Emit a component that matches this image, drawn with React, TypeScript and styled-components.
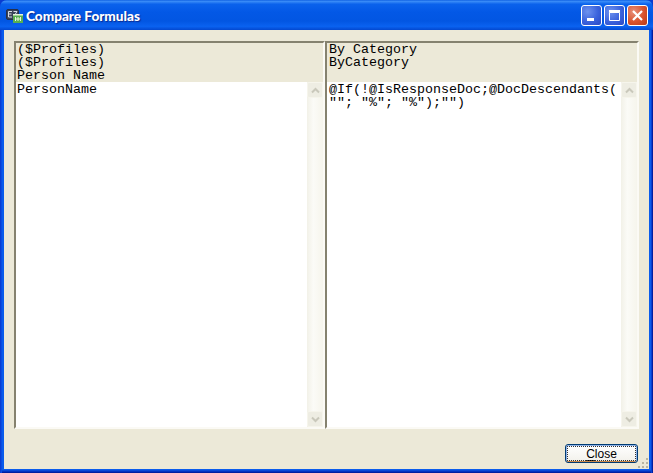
import React from "react";
import styled, { createGlobalStyle } from "styled-components";

const Global = createGlobalStyle`
  html, body { margin: 0; padding: 0; background: #0a3bd0; overflow: hidden; }
  #root { width: 653px; height: 473px; }
`;

const Win = styled.div`
  width: 653px; height: 473px; box-sizing: border-box;
  display: flex; flex-direction: column;
  background: #0a5cec;
  box-shadow: inset 1px 0 #0a3ed4, inset 2px 0 #0a4ee2, inset -1px 0 #001ea0, inset -2px 0 #0840d0, inset 0 -1px #001ea0, inset 0 -2px #0232c0, inset 0 -3px #0848d8;
  border-radius: 7px 7px 0 0;
  overflow: hidden;
`;
const TitleBar = styled.div`
  height: 30px; flex: none; box-sizing: border-box;
  display: flex; align-items: center; padding: 0 5px 0 6px;
  background: linear-gradient(180deg, #0a5be0 0%, #3c8ef8 4%, #0a62ec 14%, #0358e6 40%, #0256e2 70%, #0a62f0 88%, #0348d0 100%);
`;
const AppIcon = styled.svg`width: 17px; height: 14px; flex: none; margin-top: 2px;`;
const Title = styled.div`
  margin: 1px 0 0 3px; color: #fff; font: 900 13.6px Lato, "Open Sans", sans-serif;
  text-shadow: 1px 1px 1px #0a2a90; flex: 1; white-space: nowrap;
`;
const Controls = styled.div`display: flex; gap: 2px;`;
const Ctl = styled.div<{ $red?: boolean }>`
  width: 21px; height: 21px; box-sizing: border-box; border: 1px solid #fff; border-radius: 3px;
  background: ${p => p.$red
    ? "radial-gradient(circle at 30% 30%, #e8907a, #d8522c 55%, #b83a18)"
    : "radial-gradient(circle at 30% 30%, #6e92ee, #3a62dc 55%, #2a48c4)"};
  display: flex; align-items: center; justify-content: center;
  svg { display: block; }
`;
const Client = styled.div`
  flex: 1; margin: 0 4px 4px 4px; background: #ece9d8; min-height: 0;
  display: flex; flex-direction: column; padding: 11px 10px 6px 10px; position: relative;
`;
const Panes = styled.div`
  height: 388px; flex: none; box-sizing: border-box;
  display: grid; grid-template-columns: 311px 314px;
`;
const Pane = styled.div<{ $inset: number }>`
  box-sizing: border-box; display: flex; flex-direction: column; min-width: 0;
  border-top: 2px solid #85826f; border-left: 2px solid #85826f;
  border-right: 2px solid #fbfaf5; border-bottom: 2px solid #fbfaf5;
  --text-inset: ${p => p.$inset}px;
`;
const Head = styled.div`
  height: 39px; flex: none; padding-left: var(--text-inset); box-sizing: border-box;
  font: 13.33px/13px "Liberation Mono", monospace; color: #000; white-space: pre;
`;
const Body = styled.div`flex: 1; display: flex; min-height: 0; background: #fff;`;
const Text = styled.div`
  flex: 1; padding: 1px 0 0 var(--text-inset); min-width: 0;
  font: 13.33px/13px "Liberation Mono", monospace; color: #000; white-space: pre;
`;
const Scroll = styled.div`
  width: 16px; flex: none; display: flex; flex-direction: column; justify-content: space-between;
  background: linear-gradient(90deg, #f2f1e8, #fbfbf7 40%, #f6f5ec);
`;
const SBtn = styled.div`
  height: 16px; box-sizing: border-box; border: 1px solid #f6f5ec; border-radius: 2px;
  background: #eeede3; display: flex; align-items: center; justify-content: center;
`;
const Footer = styled.div`flex: 1; display: flex; justify-content: flex-end; align-items: flex-end; padding-right: 1px;`;
const CloseBtn = styled.button`
  width: 73px; height: 19px; box-sizing: border-box; padding: 0; border: 1px solid #003c74; border-radius: 3px;
  background: linear-gradient(180deg, #fff, #f4f3ee 85%, #e6e2d4);
  box-shadow: inset 1px 1px 0 #8fb2e6, inset -1px 0 0 #8fb2e6, inset 0 -1px 0 #c8864a;
  outline: 1px dotted #333; outline-offset: -3px;
  font: 12px "Liberation Sans", sans-serif; color: #000;
  u { text-underline-offset: 2px; }
`;
const Grip = styled.svg`position: absolute; right: 0; bottom: 0; width: 12px; height: 12px;`;

const Chev = ({ up }: { up?: boolean }) => (
  <svg width="9" height="7" viewBox="0 0 9 7">
    <path d={up ? "M1 5.5 4.5 2 8 5.5" : "M1 1.5 4.5 5 8 1.5"} fill="none" stroke="#c9c8bb" strokeWidth="2" />
  </svg>
);
const Bar = () => (
  <Scroll>
    <SBtn><Chev up /></SBtn>
    <SBtn><Chev /></SBtn>
  </Scroll>
);

export default function App() {
  return (
    <>
      <Global />
      <Win>
        <TitleBar>
          <AppIcon viewBox="0 0 17 14">
            <rect x="0.5" y="0.5" width="12" height="10" rx="1.5" fill="#3a4458" stroke="#27304a" />
            <path d="M2.5 2.5h3.5M2.5 5h3M2.5 8h3.5M2.5 2.5v5.5M7.5 2.5h3.5L7.5 8h3.5" fill="none" stroke="#d8dde6" />
            <rect x="7" y="5" width="10" height="9" fill="#58b050" />
            <rect x="7" y="5" width="10" height="1.5" fill="#e6f2dc" />
            <path d="M9.5 8v4M12 8v4M14.5 8v4M9.5 10h5" stroke="#e6f5dc" />
          </AppIcon>
          <Title>Compare Formulas</Title>
          <Controls>
            <Ctl>
              <svg width="13" height="13" viewBox="0 0 13 13"><rect x="2" y="9" width="7" height="3" fill="#fff" /></svg>
            </Ctl>
            <Ctl>
              <svg width="13" height="13" viewBox="0 0 13 13"><path d="M1.5 3.5h10v8h-10z" fill="none" stroke="#fff" /><rect x="1" y="1" width="11" height="2.4" fill="#fff" /></svg>
            </Ctl>
            <Ctl $red>
              <svg width="13" height="13" viewBox="0 0 13 13"><path d="M2 2l9 9M11 2l-9 9" stroke="#fff" strokeWidth="2.2" /></svg>
            </Ctl>
          </Controls>
        </TitleBar>
        <Client>
          <Panes>
            <Pane $inset={1}>
              <Head>{"($Profiles)\n($Profiles)\nPerson Name"}</Head>
              <Body>
                <Text>PersonName</Text>
                <Bar />
              </Body>
            </Pane>
            <Pane $inset={2}>
              <Head>{"By Category\nByCategory"}</Head>
              <Body>
                <Text>{'@If(!@IsResponseDoc;@DocDescendants(\n""; "%"; "%");"")'}</Text>
                <Bar />
              </Body>
            </Pane>
          </Panes>
          <Footer>
            <CloseBtn><u>C</u>lose</CloseBtn>
          </Footer>
          <Grip viewBox="0 0 12 12">
            <g fill="#b8b5a2">
              <rect x="9" y="1" width="2" height="2" /><rect x="5" y="5" width="2" height="2" /><rect x="9" y="5" width="2" height="2" />
              <rect x="1" y="9" width="2" height="2" /><rect x="5" y="9" width="2" height="2" /><rect x="9" y="9" width="2" height="2" />
            </g>
          </Grip>
        </Client>
      </Win>
    </>
  );
}
